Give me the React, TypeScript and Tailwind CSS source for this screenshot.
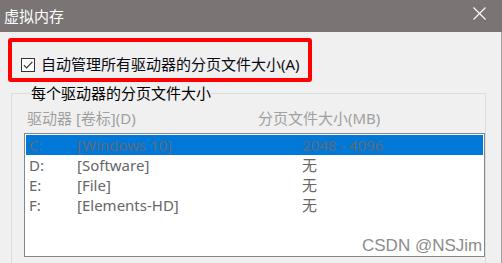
import React from "react";

const font = "font-['Noto_Sans','Noto_Sans_CJK_SC',sans-serif]";

const rows = [
  { d: "C:", l: "[Windows 10]", s: "2048 - 4096", sel: true },
  { d: "D:", l: "[Software]", s: "无", sel: false },
  { d: "E:", l: "[File]", s: "无", sel: false },
  { d: "F:", l: "[Elements-HD]", s: "无", sel: false },
];

export default function App() {
  return (
    <div className={`relative w-[502px] h-[263px] overflow-hidden bg-[#f0f0f0] ${font}`}>
      <div className="h-[32px] bg-[#7a7574] flex items-center justify-between pl-[4px] pr-[16px]">
        <span className="text-white text-[15px] leading-[20px]">虚拟内存</span>
        <svg width="13" height="13" viewBox="0 0 13 13" className="-mt-[5px]">
          <path d="M0.5 0.5L12.5 12.5M12.5 0.5L0.5 12.5" stroke="#ffffff" strokeWidth="1.1" fill="none" />
        </svg>
      </div>
      <div className="h-[231px] border-r border-[#a3a3a3] pt-[6px]">
        <div className="ml-[8px] w-[304px] h-[44px] border-4 border-[#ff0000] rounded-[3px] flex items-center pt-[9px] pl-[9px]">
          <div className="w-[14px] h-[14px] border border-[#333333] bg-white flex items-center justify-center">
            <svg width="12" height="12" viewBox="0 0 12 12">
              <path d="M1.8 6.2L4.6 9L10.4 2.8" stroke="#333333" strokeWidth="1.2" fill="none" />
            </svg>
          </div>
          <span className="ml-[6px] -mt-[1px] text-[15px] leading-[20px] text-[#0a0a14]">自动管理所有驱动器的分页文件大小(A)</span>
        </div>
        <fieldset className="ml-[11px] mt-[1px] w-[475px] h-[200px] border border-[#dcdcdc] pl-[12px]">
          <legend className="ml-[7px] text-[15px] leading-[20px] text-black">每个驱动器的分页文件大小</legend>
          <div className="mt-[5px] flex text-[15px] leading-[20px] text-[#a0a0a0]">
            <span className="pl-[3px] w-[234px]">驱动器 [卷标](D)</span>
            <span>分页文件大小(MB)</span>
          </div>
          <div className="mt-[5px] w-[461px] h-[124px] border border-[#828790] bg-white p-[1px]">
            {rows.map((r) => (
              <div
                key={r.d}
                className={`h-[20px] flex items-center pl-[3px] text-[15px] leading-[20px] ${
                  r.sel ? "bg-[#0078d7] text-[#5f6a78]" : "text-[#666666]"
                }`}
              >
                <span className="w-[48px]">{r.d}</span>
                <span className="w-[225px]">{r.l}</span>
                <span>{r.s}</span>
              </div>
            ))}
          </div>
        </fieldset>
      </div>
      <div className="absolute left-[362px] top-[236px] font-['Liberation_Sans',sans-serif] text-[17px] leading-[20px] text-[#8c8c8c] [text-shadow:0_0_2px_#ffffff]">
        CSDN @NSJim
      </div>
    </div>
  );
}
